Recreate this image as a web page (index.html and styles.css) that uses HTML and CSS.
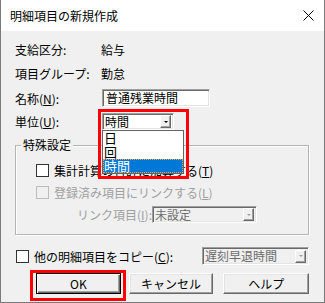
FILE: index.html
```
<!DOCTYPE html>
<html lang="ja">
<head>
    <meta charset="UTF-8">
    <title>明細項目の新規作成</title>
    <link rel="stylesheet" href="styles.css">
</head>
<body>
    <div class="window">
        <div class="titlebar">
            <span class="title">明細項目の新規作成</span>
            <svg class="close" width="11" height="11" viewBox="0 0 11 11">
                <path d="M0.5 0.5 L10.5 10.5 M10.5 0.5 L0.5 10.5" stroke="#000" stroke-width="1" fill="none"/>
            </svg>
        </div>

        <div class="content">
            <div class="row row-first">
                <span class="label">支給区分:</span>
                <span class="value">給与</span>
            </div>
            <div class="row row-group">
                <span class="label">項目グループ:</span>
                <span class="value">勤怠</span>
            </div>
            <div class="row row-name">
                <span class="label">名称(<u>N</u>):</span>
                <div class="textbox">普通残業時間</div>
            </div>
            <div class="row row-unit">
                <span class="label">単位(<u>U</u>):</span>
                <div class="combo combo-unit">
                    <span class="combo-text">時間</span>
                    <span class="combo-btn"><i class="arrow"></i></span>
                </div>
            </div>

            <div class="group">
                <span class="legend">特殊設定</span>
                <div class="check-row check-sum">
                    <span class="check"></span>
                    <span>集計計算の合計に加算する(<u>T</u>)</span>
                </div>
                <div class="check-row check-link disabled">
                    <span class="check"></span>
                    <span>登録済み項目にリンクする(<u>L</u>)</span>
                </div>
                <div class="link-row">
                    <span class="link-label">リンク項目(<u>I</u>):</span>
                    <div class="combo combo-link disabled">
                        <span class="combo-text">未設定</span>
                        <span class="combo-btn"><i class="arrow"></i></span>
                    </div>
                </div>
            </div>

            <div class="copy-row">
                <span class="check"></span>
                <span>他の明細項目をコピー(<u>C</u>):</span>
                <div class="combo combo-copy disabled">
                    <span class="combo-text">遅刻早退時間</span>
                    <span class="combo-btn"><i class="arrow"></i></span>
                </div>
            </div>

            <div class="buttons">
                <button type="button" class="button button-ok">OK</button>
                <button type="button" class="button button-cancel">キャンセル</button>
                <button type="button" class="button button-help">ヘルプ</button>
            </div>
        </div>

        <!-- 開いたドロップダウン -->
        <div class="droplist">
            <div class="drop-item">日</div>
            <div class="drop-item">回</div>
            <div class="drop-item selected">時間</div>
        </div>

        <!-- 赤枠の注記 -->
        <div class="mark mark-unit"></div>
        <div class="mark mark-ok"></div>
    </div>
</body>
</html>
```

FILE: styles.css
```
body {
    margin: 0;
    font-family: "Noto Sans CJK JP", "Noto Sans", sans-serif;
    font-size: 12px;
    color: #000;
    background: #f0f0f0;
}

.window {
    position: relative;
    width: 325px;
    height: 303px;
    box-sizing: border-box;
    border: 1px solid #7a7a7a;
    border-top: none;
    background: #f0f0f0;
    display: flex;
    flex-direction: column;
}

.titlebar {
    height: 31px;
    background: #fff;
    display: flex;
    align-items: center;
    padding: 0 10px 0 9px;
}

.title {
    font-size: 12px;
    line-height: 14px;
}

.close {
    margin-left: auto;
    margin-right: 0;
}

.content {
    padding: 0 15px 0 14px;
    display: flex;
    flex-direction: column;
}

.row {
    display: flex;
    align-items: center;
    height: 18px;
}

.row-first { margin-top: 9px; }
.row-group { margin-top: 6px; }
.row-name { margin-top: 7px; }
.row-unit { margin-top: 6px; height: 17px; }

.label {
    width: 86px;
    flex: none;
}

u {
    text-decoration: underline;
    text-underline-offset: 1px;
}

/* 入力欄 (クラシックなへこみ枠) */
.textbox {
    margin-left: 1px;
    width: 108px;
    height: 18px;
    box-sizing: border-box;
    background: #fff;
    border: 1px solid;
    border-color: #a0a0a0 #fff #fff #a0a0a0;
    box-shadow: inset 1px 1px 0 #696969, inset -1px -1px 0 #e3e3e3;
    padding: 0 3px;
    line-height: 16px;
    font-size: 12px;
}

.combo {
    display: flex;
    align-items: center;
    height: 17px;
    box-sizing: border-box;
    background: #fff;
    border: 1px solid;
    border-color: #a0a0a0 #fff #fff #a0a0a0;
    box-shadow: inset 1px 1px 0 #696969, inset -1px -1px 0 #e3e3e3;
    padding: 1px 2px 1px 2px;
}

.combo-text {
    flex: 1;
    line-height: 14px;
    white-space: nowrap;
}

.combo-btn {
    width: 11px;
    height: 13px;
    box-sizing: border-box;
    background: #f0f0f0;
    border: 1px solid;
    border-color: #fff #696969 #696969 #fff;
    box-shadow: inset -1px -1px 0 #a0a0a0;
    display: flex;
    align-items: center;
    justify-content: center;
}

.arrow {
    width: 0;
    height: 0;
    border-top: 2px solid #000;
    border-left: 2px solid transparent;
    border-right: 2px solid transparent;
}

.combo-unit {
    margin-left: 1px;
    width: 72px;
}

.combo.disabled {
    background: #f0f0f0;
    color: #6d6d6d;
}

.combo.disabled .arrow {
    border-top-color: #a0a0a0;
}

/* グループボックス */
.group {
    margin-top: 15px;
    border: 1px solid #b4b4b4;
    box-shadow: inset 1px 1px 0 #fff, 1px 1px 0 #fff;
    display: flex;
    flex-direction: column;
    align-items: flex-start;
    padding: 0 0 11px 20px;
}

.legend {
    margin: -8px 0 0 -15px;
    padding: 0 2px;
    line-height: 14px;
    background: #f0f0f0;
}

.check-row {
    display: flex;
    align-items: center;
    height: 14px;
}

.check-sum { margin-top: 11px; }
.check-link { margin-top: 8px; }

.check {
    width: 13px;
    height: 13px;
    box-sizing: border-box;
    background: #fff;
    border: 1px solid #333;
    margin-right: 5px;
    flex: none;
}

.disabled {
    color: #a0a0a0;
}

.check-row.disabled .check {
    background: #f0f0f0;
    border-color: #bcbcbc;
}

.link-row {
    display: flex;
    align-items: center;
    margin-top: 7px;
    margin-left: 41px;
}

.link-label {
    width: 75px;
    color: #a0a0a0;
}

.combo-link {
    width: 105px;
}

.copy-row {
    display: flex;
    align-items: center;
    margin-top: 12px;
    height: 18px;
    padding-left: 1px;
}

.combo-copy {
    margin-left: auto;
    width: 107px;
    height: 18px;
}

.buttons {
    display: flex;
    margin-top: 8px;
}

.button {
    height: 21px;
    width: 85px;
    box-sizing: border-box;
    font-family: inherit;
    font-size: 12px;
    padding: 0;
    background: #f0f0f0;
    border: 1px solid;
    border-color: #fff #696969 #696969 #fff;
    box-shadow: inset -1px -1px 0 #a0a0a0, inset 1px 1px 0 #e3e3e3;
    color: #000;
}

.button-ok {
    margin-left: 21px;
    border-color: #000;
    box-shadow: inset 1px 1px 0 #fff, inset -1px -1px 0 #696969, inset -2px -2px 0 #a0a0a0;
}

.button-cancel { margin-left: 8px; }
.button-help { margin-left: 10px; width: 86px; }

/* ドロップダウンリスト */
.droplist {
    position: absolute;
    left: 101px;
    top: 130px;
    width: 82px;
    box-sizing: border-box;
    background: #fff;
    border: 1px solid #646464;
}

.drop-item {
    height: 14px;
    line-height: 14px;
    padding-left: 1px;
    font-size: 13px;
}

.drop-item.selected {
    background: #0078d7;
    color: #fff;
    outline: 1px dotted #f0a040;
    outline-offset: -1px;
}

.mark {
    position: absolute;
    border: 3px solid #ff0000;
    box-sizing: border-box;
}

.mark-unit {
    left: 97px;
    top: 109px;
    width: 91px;
    height: 70px;
}

.mark-ok {
    left: 29px;
    top: 270px;
    width: 96px;
    height: 31px;
}
```
